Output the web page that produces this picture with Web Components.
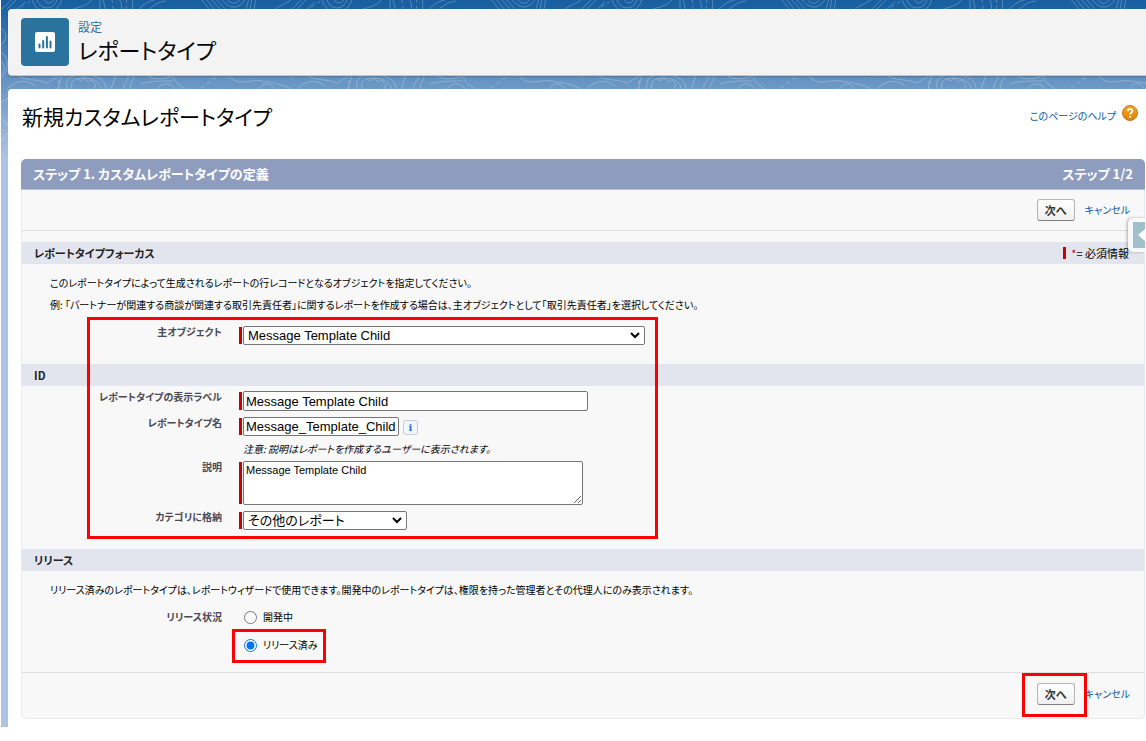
<!DOCTYPE html>
<html lang="ja">
<head>
<meta charset="utf-8">
<title>レポートタイプ | 設定</title>
<style>
  body {
    margin: 0;
    background: #fff;
    color: #000;
    font-family: "Noto Sans CJK JP", sans-serif;
    font-size: 10px;
    line-height: 22px;
    font-feature-settings: "palt";
  }
</style>
</head>
<body>
<setup-page>
  <object-header slot="header">
    <span slot="eyebrow">設定</span>
    レポートタイプ
  </object-header>
  <report-type-form></report-type-form>
</setup-page>

<script>
const define = (name, html) => {
  const template = document.createElement("template");
  template.innerHTML = html;
  customElements.define(name, class extends HTMLElement {
    constructor() {
      super();
      this.attachShadow({ mode: "open" }).append(template.content.cloneNode(true));
    }
  });
};

/* Blue themed backdrop with a contour-line pattern */
define("setup-page", `
  <style>
    :host {
      display: block; position: relative; margin-left: 1px; padding: 9px 0 0 7px;
      background: linear-gradient(#195e9f 0, #1d62a3 10px, #6a96c4 84px, #b0c4e1 160px);
    }
    svg { position: absolute; inset: 0; width: 100%; height: 160px; }
    header, main { position: relative; }
    header { margin-bottom: 13px; }
    main { background: #fff; border-radius: 4px 0 0 0; padding: 13px 1px 8px 13px; }
  </style>
  <svg aria-hidden="true">
    <defs>
      <pattern id="contours" width="290" height="160" patternUnits="userSpaceOnUse">
        <g fill="none" stroke="#fff" stroke-opacity=".24">
          <circle cx="46" cy="-3" r="15"/><circle cx="46" cy="-2" r="10"/><circle cx="48" cy="-2" r="5"/>
          <path d="M1 9 12-2M6 9 17-2M16 9 24 2M72 9C84 6 90 3 91-2M99 0v9"/>
          <path d="M20 7 30 1" stroke-dasharray="4 3"/>
          <path d="M101-2c2 4 3 8 3 12M117-2c4 4 4 8 3 12M131-2c1 4 1 8 0 12"/>
          <path d="M110-2c2 4 2 8 2 12M125-2c1 4 1 8 0 12" stroke-dasharray="5 3"/>
          <path d="M137 10c8-8 12-9 20-11M147 10c8-6 10-8 18-9"/>
          <path d="M199-2l10 12M204-2l10 12M209-2l11 12M214-2l11 12M220-2c8 12 18 12 25 0M225-2c5 7 10 7 15 0M245 10l3-12M249 10l2-12M253 10l2-12"/>
          <path d="M273 10c7-6 12-6 17-10M66 89c-2-13 6-14 17-14 13 0 22 5 22 14M71 89c-3-10 6-11 12-11 9 0 17 4 17 11M76 79l4 2 3-3 4 4 4-2 4 5-2 4"/>
          <path d="M6 89c8-9 20-10 28-3M16 75c10 7 18 3 30 8l12-7M123 89c-2-5 5-8 4-14M130 89c-3-5 4-9 3-14M110 89l5-14M61 75l-4 14"/>
          <path d="M145 75c9 6 18 4 26 1M139 84c8-3 21-3 33-3M172 76c2 7 8 10 12 13M156 89c6-7 13-7 18 0"/>
          <path d="M228 76c9 11 20 3 32 5 14 2 24 4 30 8M258 89c5-7 10-7 16 0"/>
          <path d="M200 88l18-13M58 80v9" stroke-dasharray="4 3"/>
          <path d="M0 28c6 5 7 10 0 17M0 52c9 6 8 20 0 26M0 61c5 5 4 10 0 14M0 103c4-4 6-3 7-5M0 118c4 5 6 4 7 9M0 141c4-4 5-7 7-8"/>
        </g>
      </pattern>
    </defs>
    <rect width="100%" height="160" fill="url(#contours)"/>
  </svg>
  <header><slot name="header"></slot></header>
  <main><slot></slot></main>
`);

define("object-header", `
  <style>
    :host {
      display: flex; align-items: center; gap: 9px; box-sizing: border-box; min-height: 67px; padding: 0 13px;
      background: #f3f3f3; border-bottom: 1px solid #c4c8ce; border-radius: 4px 0 0 4px;
      box-shadow: 0 1px 2px rgba(0, 0, 0, .2);
    }
    .tile { display: grid; place-items: center; width: 48px; height: 48px; border-radius: 4px; background: #2a739e; }
    .text { padding-bottom: 2px; }
    .eyebrow { color: #2a739e; font-size: 12px; line-height: 16px; }
    h1 { margin: 0; color: #080707; font-size: 22px; line-height: 28px; font-weight: 400; }
  </style>
  <span class="tile">
    <svg width="20" height="20" viewBox="0 0 20 20" aria-hidden="true">
      <rect width="20" height="20" rx="2" fill="#fff"/>
      <path d="M4.500 12.500v3M8.200 9v6.500M11.900 5v10.500M15.500 9.500v6" fill="none" stroke="#2a739e" stroke-width="2" stroke-linecap="round"/>
    </svg>
  </span>
  <div class="text">
    <div class="eyebrow"><slot name="eyebrow"></slot></div>
    <h1><slot></slot></h1>
  </div>
`);

define("page-title", `
  <style>
    :host { display: flex; justify-content: space-between; padding: 0 7px 29px 1px; }
    h2 { margin: 0; font-size: 21px; line-height: 28px; font-weight: 400; }
    a { display: flex; gap: 6px; align-items: center; height: 22px; color: #015ba7; text-decoration: none; }
    span { padding-top: 6px; }
  </style>
  <h2><slot></slot></h2>
  <a href="#help"><span><slot name="help"></slot></span>
    <svg width="16" height="16" viewBox="0 0 16 16" aria-hidden="true">
      <defs><linearGradient id="g" x2="0" y2="1"><stop stop-color="#f6a81c"/><stop offset="1" stop-color="#dd8205"/></linearGradient></defs>
      <circle cx="8" cy="8" r="7.500" fill="url(#g)" stroke="#c27a1c"/>
      <path d="M5.800 6.300C5.800 3.300 10.400 3.300 10.400 6c0 1.700-2.300 1.800-2.300 3.600" fill="none" stroke="#fff" stroke-width="1.700"/>
      <circle cx="8.100" cy="11.800" r="1.100" fill="#fff"/>
    </svg>
  </a>
`);

/* Next / cancel row, above and below the form */
define("action-bar", `
  <style>
    :host { display: flex; justify-content: flex-end; align-items: center; gap: 10px; padding: 9px 14px; }
    button {
      box-sizing: border-box; width: 38px; height: 22px; padding: 0; color: #333;
      font: 700 11px/18px "Noto Sans CJK JP", sans-serif; font-feature-settings: inherit;
      border: 1px solid #b5b5b5; border-bottom-color: #7f7f7f; border-radius: 3px;
      background: linear-gradient(#fff, #f0f0f0);
    }
    a { color: #015ba7; text-decoration: none; }
  </style>
  <button type="button">次へ</button>
  <a href="#cancel">キャンセル</a>
`);

define("wizard-block", `
  <style>
    :host { display: block; position: relative; }
    .title {
      display: flex; justify-content: space-between; padding: 0 12px; color: #fff;
      background: #8e9dbe; border-bottom: 1px solid #b9c2dc; border-radius: 5px 5px 0 0;
      font-size: 13px; line-height: 30px; font-weight: 700;
    }
    h3 { margin: 0; font-size: inherit; }
    .body { background: #f8f8f8; border: 1px solid #eaeaea; border-top: 0; border-radius: 0 0 5px 5px; }
    .top { margin-bottom: 11px; border-bottom: 1px solid #dfdfdf; }
    .bottom { padding: 1px 0 4px; border-top: 1px solid #dfdfdf; }
  </style>
  <div class="title"><h3><slot name="title"></slot></h3><span><slot name="step"></slot></span></div>
  <div class="body">
    <div class="top"><action-bar></action-bar></div>
    <slot></slot>
    <div class="bottom"><action-bar></action-bar></div>
  </div>
  <slot name="over"></slot>
`);

define("form-section", `
  <style>
    :host { display: block; }
    .bar {
      display: flex; justify-content: space-between; padding: 0 15px 0 12px;
      background: #e3e5ee; line-height: 22px;
    }
    h4 { margin: 0; font-size: 11px; font-weight: 700; color: #222; }
    .rows { display: flex; flex-direction: column; gap: 6px; padding: 5px 0 19px; }
    :host([spaced]) .rows { padding-top: 10px; }
    :host([last]) .rows { padding-bottom: 16px; }
    ::slotted([slot="intro"]) { margin: 0; padding-left: 28px; }
    .intro { padding-top: 8px; }
    :host(:not([intro])) .intro { display: none; }
  </style>
  <div class="bar"><h4><slot name="title"></slot></h4><slot name="legend"></slot></div>
  <div class="intro"><slot name="intro"></slot></div>
  <div class="rows"><slot></slot></div>
`);

define("required-legend", `
  <style>
    :host { display: flex; align-items: center; gap: 5px; font-size: 11px; }
    i { width: 3px; height: 12px; background: #c00; }
    b { color: #c00; font-weight: 400; }
  </style>
  <i></i><span><b>*</b>= <slot></slot></span>
`);

/* Label column, required marker, control column */
define("form-row", `
  <style>
    :host { display: grid; grid-template-columns: 217px 3px 1fr; color: #4a4a56; }
    .label { padding-right: 17px; text-align: right; font-weight: 700; line-height: 12px; }
    .mark { margin: 1px 0; }
    :host([required]) .mark { background: #c00; }
    .field { display: flex; gap: 4px; margin-left: 1px; color: #000; }
    :host([choice]) { align-items: center; }
  </style>
  <div class="label"><slot name="label"></slot></div>
  <div class="mark"></div>
  <div class="field"><slot></slot></div>
`);

/* Red annotation frame laid over the page */
define("callout-frame", `
  <style>:host { display: block; position: absolute; box-sizing: border-box; border: 3px solid #f00; pointer-events: none; }</style>
`);

define("sidebar-handle", `
  <style>
    :host {
      display: block; position: absolute; right: 0; top: 59px; box-sizing: border-box; width: 17px; height: 34px; padding: 4px 0 4px 5px;
      background: #f8f8f8; border-radius: 5px 0 0 5px; box-shadow: -1px 0 3px rgba(0, 0, 0, .3);
    }
    button { display: grid; place-items: center end; width: 12px; height: 26px; padding: 0; border: 0; background: #9fbfcb; }
  </style>
  <button type="button" aria-label="サイドバーを開く">
    <svg width="7" height="12" viewBox="0 0 7 12"><path d="M7 0v12L0 6z" fill="#fff"/></svg>
  </button>
`);

define("report-type-form", `
  <style>
    :host { display: block; }
    input, select, textarea {
      box-sizing: border-box; margin: 0; color: #000; background-color: #fff;
      font-family: "Liberation Sans", "Noto Sans CJK JP", sans-serif; font-size: 13px; font-feature-settings: inherit;
    }
    select {
      appearance: none; height: 19px; padding: 0 20px 0 4px; border: 1px solid #767676; border-radius: 2px; line-height: 17px;
      background: #fff url("data:image/svg+xml,%3Csvg xmlns='http://www.w3.org/2000/svg' width='10' height='7'%3E%3Cpath d='M1 1l4 4 4-4' fill='none' stroke='%23000' stroke-width='2'/%3E%3C/svg%3E") no-repeat right 4px center;
    }
    input[type="text"] { height: 20px; padding: 0 2px; border: 1px solid #767676; border-radius: 2px; line-height: 18px; }
    textarea { width: 340px; height: 44px; padding: 2px; border: 1px solid #767676; border-radius: 2px; font-size: 11px; line-height: 12px; }
    #object { width: 402px; }
    #display { width: 345px; }
    input#name { width: 156px; height: 19px; }
    #category { width: 164px; }
    em { line-height: 13px; }
    .info {
      width: 15px; height: 15px; margin-top: 3px; padding: 0; border: 1px solid #c8ccd4; border-radius: 3px; background: #f2f5f9;
      color: #1a73d9; font: 700 10px/12px "DejaVu Serif", serif;
    }
    input[type="radio"] { width: 13px; height: 13px; margin: 0 1px; }
    .choice { display: flex; align-items: center; gap: 5px; height: 22px; }
    .main { left: 66px; top: 158px; width: 571px; height: 222px; }
    .released { left: 211px; top: 470px; width: 94px; height: 34px; }
    .next { right: 58px; bottom: 2px; width: 65px; height: 44px; }
  </style>
  <page-title>新規カスタムレポートタイプ<span slot="help">このページのヘルプ</span></page-title>
  <wizard-block>
    <span slot="title">ステップ 1. カスタムレポートタイプの定義</span>
    <span slot="step">ステップ 1/2</span>

    <form-section intro spaced>
      <span slot="title">レポートタイプフォーカス</span>
      <required-legend slot="legend">必須情報</required-legend>
      <p slot="intro">このレポートタイプによって生成されるレポートの行レコードとなるオブジェクトを指定してください。</p>
      <p slot="intro">例: 「パートナーが関連する商談が関連する取引先責任者」に関するレポートを作成する場合は、主オブジェクトとして「取引先責任者」を選択してください。</p>
      <form-row required>
        <label slot="label" for="object">主オブジェクト</label>
        <select id="object"><option>Message Template Child</option></select>
      </form-row>
    </form-section>

    <form-section>
      <span slot="title">ID</span>
      <form-row required>
        <label slot="label" for="display">レポートタイプの表示ラベル</label>
        <input type="text" id="display" value="Message Template Child">
      </form-row>
      <form-row required>
        <label slot="label" for="name">レポートタイプ名</label>
        <input type="text" id="name" value="Message_Template_Child">
        <button type="button" class="info">i</button>
      </form-row>
      <form-row><em>注意: 説明はレポートを作成するユーザーに表示されます。</em></form-row>
      <form-row required>
        <label slot="label" for="description">説明</label>
        <textarea id="description">Message Template Child</textarea>
      </form-row>
      <form-row required>
        <label slot="label" for="category">カテゴリに格納</label>
        <select id="category"><option>その他のレポート</option></select>
      </form-row>
    </form-section>

    <form-section intro last>
      <span slot="title">リリース</span>
      <p slot="intro">リリース済みのレポートタイプは、レポートウィザードで使用できます。開発中のレポートタイプは、権限を持った管理者とその代理人にのみ表示されます。</p>
      <form-row choice>
        <span slot="label">リリース状況</span>
        <label class="choice"><input type="radio" name="status">開発中</label>
      </form-row>
      <form-row choice>
        <label class="choice"><input type="radio" name="status" checked>リリース済み</label>
      </form-row>
    </form-section>

    <callout-frame slot="over" class="main"></callout-frame>
    <callout-frame slot="over" class="released"></callout-frame>
    <callout-frame slot="over" class="next"></callout-frame>
    <sidebar-handle slot="over"></sidebar-handle>
  </wizard-block>
`);
</script>
</body>
</html>
